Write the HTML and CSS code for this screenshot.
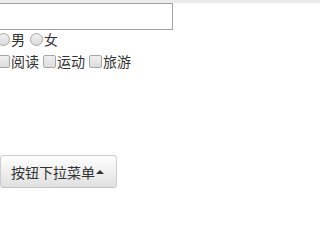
FILE: index.html
```html
<!DOCTYPE html>
<html>
<head>
<meta charset="utf-8">
<link rel="stylesheet" href="styles.css">
</head>
<body>
<div class="topband"></div>
<div class="page">
  <input class="text-input" type="text">
  <div class="row radios">
    <label class="opt"><span class="radio"></span>男</label>
    <label class="opt"><span class="radio"></span>女</label>
  </div>
  <div class="row checks">
    <label class="opt"><span class="check"></span>阅读</label>
    <label class="opt"><span class="check"></span>运动</label>
    <label class="opt"><span class="check"></span>旅游</label>
  </div>
  <div class="btn-wrap">
    <button class="btn" type="button">按钮下拉菜单<span class="caret"></span></button>
  </div>
</div>
</body>
</html>
```
FILE: styles.css
```css
html, body {
  margin: 0;
  padding: 0;
  background: #fff;
}
body {
  font-family: "Noto Sans CJK SC", "Noto Sans", sans-serif;
  font-size: 14px;
  color: #333;
  overflow: hidden;
}
.topband {
  height: 3px;
  background: #ebebeb;
}
.page {
  display: flex;
  flex-direction: column;
  align-items: flex-start;
}
.text-input {
  display: block;
  box-sizing: border-box;
  margin: 0 0 0 -30px;
  width: 203px;
  height: 27px;
  border: 1px solid #a3a3a3;
  background: #fff;
  padding: 0 4px;
  outline: none;
}
.row {
  display: flex;
  align-items: center;
  margin-left: -3px;
}
.radios {
  margin-top: 1px;
  height: 17px;
}
.checks {
  margin-top: 5px;
  height: 17px;
}
.opt {
  display: flex;
  align-items: center;
  line-height: 17px;
  color: #333;
}
.radios .opt { margin-right: 5px; }
.checks .opt { margin-right: 4px; }
.radio {
  box-sizing: border-box;
  width: 13px;
  height: 13px;
  border-radius: 50%;
  border: 1px solid #a6a6a6;
  background: linear-gradient(#f0f0f0, #dcdcdc);
  margin-right: 1px;
}
.check {
  box-sizing: border-box;
  width: 13px;
  height: 13px;
  border-radius: 2px;
  border: 1px solid #a6a6a6;
  background: linear-gradient(#f0f0f0, #dcdcdc);
  margin-right: 1px;
}
.btn-wrap {
  margin-top: 85px;
}
.btn {
  display: flex;
  align-items: center;
  box-sizing: border-box;
  height: 33px;
  margin: 0;
  padding: 0 12px 0 10px;
  font-family: inherit;
  font-size: 14px;
  color: #333;
  border: 1px solid #ccc;
  border-bottom-color: #c2c2c2;
  border-radius: 4px;
  background: linear-gradient(#ffffff, #e0e0e0);
  box-shadow: inset 0 1px 0 rgba(255,255,255,.15), 0 1px 1px rgba(0,0,0,.075);
}
.caret {
  display: inline-block;
  width: 0;
  height: 0;
  margin-left: 1px;
  border-left: 4px solid transparent;
  border-right: 4px solid transparent;
  border-bottom: 4px solid #333;
}
```
